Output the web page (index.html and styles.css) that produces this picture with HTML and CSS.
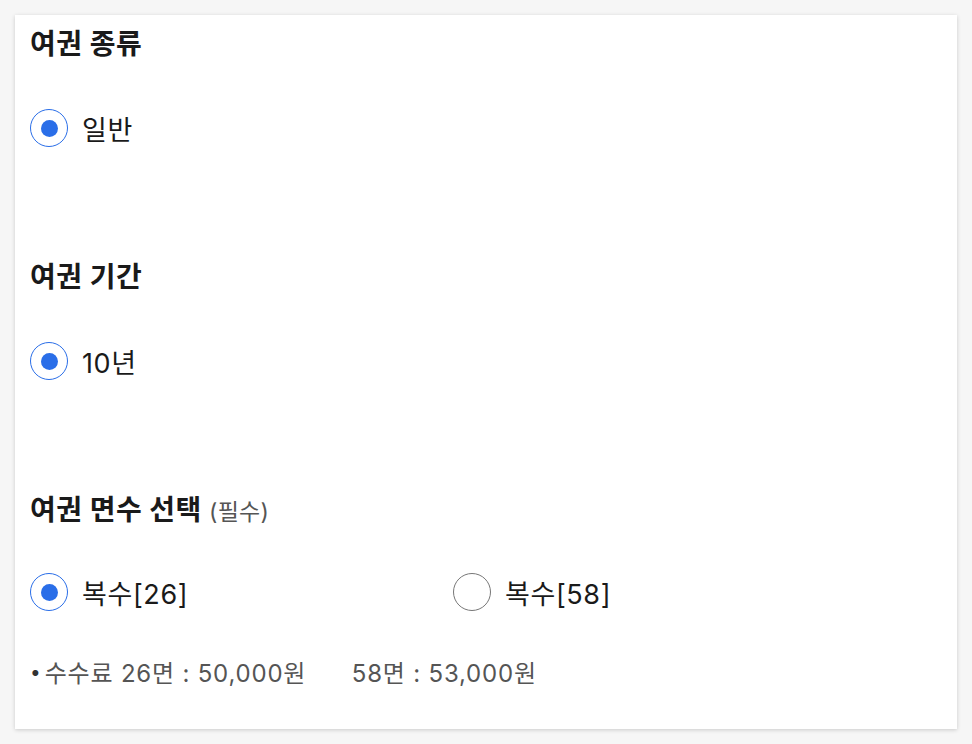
FILE: index.html
```html
<!DOCTYPE html>
<html lang="ko">
<head>
  <meta charset="UTF-8" />
  <meta name="viewport" content="width=device-width, initial-scale=1.0"/>
  <title>여권 신청</title>
  <link rel="stylesheet" href="styles.css">
</head>
<body>
  <div class="card">
    <div class="section">
      <h2 class="title">여권 종류</h2>
      <div class="options">
        <label class="option"><span class="radio checked"></span>일반</label>
      </div>
    </div>

    <div class="section">
      <h2 class="title">여권 기간</h2>
      <div class="options">
        <label class="option"><span class="radio checked"></span>10년</label>
      </div>
    </div>

    <div class="section last">
      <h2 class="title">여권 면수 선택 <span class="req">(필수)</span></h2>
      <div class="options">
        <label class="option"><span class="radio checked"></span>복수[26]</label>
        <label class="option"><span class="radio"></span>복수[58]</label>
      </div>
      <p class="fee"><span class="dot">•</span>수수료 26면 : 50,000원 <span class="fee-gap">58면 : 53,000원</span></p>
    </div>
  </div>
</body>
</html>
```

FILE: styles.css
```css
* {
  box-sizing: border-box;
}

body {
  margin: 0;
  padding: 15px;
  background-color: #f6f6f6;
  font-family: "Inter", "Noto Sans CJK KR", sans-serif;
  color: #1a1a1a;
}

.card {
  background-color: #fff;
  box-shadow: 0 1px 4px rgba(0, 0, 0, 0.18);
  padding: 10px 15px 41px 15px;
  height: 714px;
}

.section {
  margin-bottom: 111px;
}

.section.last {
  margin-top: 2px;
  margin-bottom: 0;
}

.title {
  margin: 0 0 46px 0;
  font-size: 28px;
  line-height: 38px;
  font-weight: 700;
  letter-spacing: 0.5px;
}

.section.last .title {
  margin-bottom: 44px;
}

.req {
  font-size: 23px;
  line-height: 1;
  font-weight: 400;
  color: #555;
  letter-spacing: 0.3px;
}

.options {
  display: grid;
  grid-template-columns: 423px 1fr;
}

.option {
  display: flex;
  align-items: center;
  gap: 14px;
  height: 38px;
  font-size: 27px;
  letter-spacing: 0.6px;
}

.radio {
  width: 38px;
  height: 38px;
  border-radius: 50%;
  border: 1px solid #777;
  display: flex;
  align-items: center;
  justify-content: center;
  flex-shrink: 0;
}

.radio.checked {
  border-color: #2a6ee8;
}

.radio.checked::after {
  content: "";
  width: 17px;
  height: 17px;
  border-radius: 50%;
  background-color: #2a6ee8;
}

.fee {
  margin: 48px 0 0 0;
  font-size: 24px;
  line-height: 30px;
  color: #555;
  letter-spacing: 0.8px;
}

.dot {
  font-size: 19px;
  line-height: 1;
  vertical-align: 3px;
  letter-spacing: 0;
  margin-right: 4px;
  color: #333;
}

.fee-gap {
  margin-left: 38px;
}
```
